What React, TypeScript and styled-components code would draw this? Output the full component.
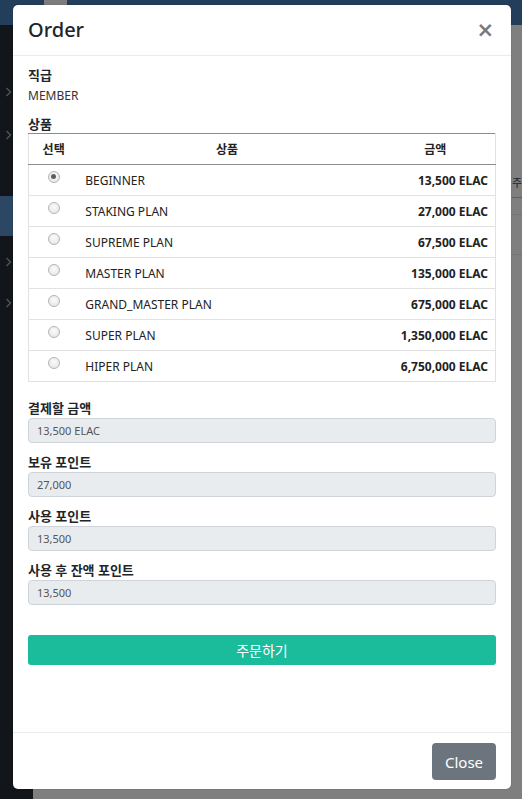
import React from "react";
import styled, { createGlobalStyle } from "styled-components";

const Global = createGlobalStyle`
  html, body { margin: 0; padding: 0; }
  body {
    width: 522px; height: 799px; overflow: hidden;
    font-family: "Noto Sans", "Noto Sans CJK KR", sans-serif;
    color: #212529;
  }
  * { box-sizing: border-box; }
`;

const Page = styled.div`
  position: relative;
  width: 522px;
  height: 799px;
  display: grid;
  grid-template-rows: 25px 1fr;
  grid-template-columns: 33px 1fr;
  background: #7f7f7f;
  overflow: hidden;
`;

const TopBar = styled.div`
  grid-column: 1 / 3;
  background: #233e5a;
  display: flex;
  padding-left: 44px;
`;

const TopBlock = styled.div`
  width: 23px;
  height: 5px;
  background: #7d7d7d;
`;

const SideBar = styled.div`
  background: #121519;
  display: flex;
  flex-direction: column;
  padding-top: 58px;
`;

const SideItem = styled.div<{ $active?: boolean; $h: number }>`
  height: ${(p) => p.$h}px;
  display: flex;
  align-items: center;
  padding-left: 5px;
  color: #4a4f55;
  font-size: 13px;
  background: ${(p) => (p.$active ? "#2b4764" : "transparent")};
`;

const Main = styled.div`
  display: flex;
  flex-direction: column;
  padding: 141px 0 0 479px;
`;

const BgRow = styled.div<{ $h: number; $light?: boolean }>`
  height: ${(p) => p.$h}px;
  border-bottom: 1px solid ${(p) => (p.$light ? "#767676" : "#5f5f5f")};
  display: flex;
  align-items: center;
  padding-left: 0;
  font-family: "Noto Sans CJK KR", sans-serif;
  font-size: 11px;
  color: #222;
  white-space: nowrap;
  overflow: hidden;
`;

const Modal = styled.div`
  position: absolute;
  top: 5px;
  left: 13px;
  width: 498px;
  height: 784px;
  background: #fff;
  border-radius: 5px;
  display: flex;
  flex-direction: column;
  box-shadow: 0 0 2px rgba(0, 0, 0, 0.2);
`;

const Header = styled.div`
  height: 51px;
  flex: none;
  display: flex;
  align-items: center;
  justify-content: space-between;
  padding: 0 15px;
  border-bottom: 1px solid #e9ecef;
`;

const Title = styled.h5`
  margin: 0;
  font-size: 20px;
  font-weight: 500;
  color: #212529;
  line-height: 24px;
`;

const CloseX = styled.button`
  border: 0;
  background: none;
  padding: 0;
  margin-right: 2px;
  font-family: "DejaVu Sans", sans-serif;
  font-size: 21px;
  font-weight: 700;
  line-height: 1;
  color: #7a7a7a;
  cursor: pointer;
`;

const Body = styled.div`
  flex: 1;
  padding: 10px 15px 0;
  display: flex;
  flex-direction: column;
`;

const Label = styled.div<{ $mt?: number }>`
  font-size: 13px;
  font-weight: 700;
  line-height: 18px;
  margin-top: ${(p) => p.$mt ?? 0}px;
  color: #212529;
`;

const Value = styled.div`
  font-size: 12px;
  line-height: 18px;
  margin-top: 3px;
  color: #333;
`;

const Table = styled.table`
  margin-top: 0;
  width: 100%;
  border-collapse: collapse;
  font-size: 12px;
  color: #222;
  border: 1px solid #e2e2e2;
  border-top: 1px solid #8c8c8c;
`;

const Th = styled.th<{ $align?: string }>`
  height: 31px;
  font-weight: 700;
  text-align: ${(p) => p.$align ?? "center"};
  border-bottom: 1px solid #8c8c8c;
  padding: 0;
  font-size: 12px;
`;

const Tr = styled.tr`
  height: 31px;
  & + & td { border-top: 1px solid #e2e2e2; }
`;

const Td = styled.td<{ $align?: string; $bold?: boolean }>`
  padding: 0 7px;
  text-align: ${(p) => p.$align ?? "left"};
  font-weight: ${(p) => (p.$bold ? 700 : 400)};
  white-space: nowrap;
`;

const RadioCell = styled.td`
  text-align: center;
  padding: 0;
  vertical-align: middle;
`;

const Radio = styled.span<{ $checked?: boolean }>`
  display: inline-block;
  width: 12px;
  height: 12px;
  border-radius: 50%;
  border: 1px solid #b5b5b5;
  background: radial-gradient(circle at 50% 40%, #fbfbfb 0%, #e2e2e2 100%);
  position: relative;
  top: -2px;
  &::after {
    content: "";
    display: ${(p) => (p.$checked ? "block" : "none")};
    position: absolute;
    left: 2.5px;
    top: 2.5px;
    width: 5px;
    height: 5px;
    border-radius: 50%;
    background: #5e5e5e;
  }
`;

const Field = styled.div`
  margin-top: 1px;
  height: 25px;
  background: #e9ecef;
  border: 1px solid #ced4da;
  border-radius: 4px;
  display: flex;
  align-items: center;
  padding: 0 8px;
  font-size: 11px;
  color: #555;
`;

const OrderButton = styled.button`
  margin-top: 30px;
  height: 30px;
  width: 100%;
  border: 0;
  border-radius: 3px;
  background: #1abc9c;
  color: #fff;
  font-family: "Noto Sans CJK KR", sans-serif;
  font-size: 14px;
  cursor: pointer;
`;

const Footer = styled.div`
  flex: none;
  height: 57px;
  border-top: 1px solid #e9ecef;
  display: flex;
  justify-content: flex-end;
  align-items: flex-start;
  padding: 10px 15px 0;
`;

const CloseButton = styled.button`
  height: 37px;
  width: 64px;
  border: 0;
  border-radius: 4px;
  background: #6c757d;
  color: #fff;
  font-family: "Noto Sans", sans-serif;
  font-size: 15px;
  cursor: pointer;
`;

const Chevron = () => (
  <svg width="7" height="10" viewBox="0 0 7 10">
    <path d="M1.5 1 L5.5 5 L1.5 9" stroke="#4f545a" strokeWidth="1.4" fill="none" />
  </svg>
);

const plans = [
  ["BEGINNER", "13,500 ELAC"],
  ["STAKING PLAN", "27,000 ELAC"],
  ["SUPREME PLAN", "67,500 ELAC"],
  ["MASTER PLAN", "135,000 ELAC"],
  ["GRAND_MASTER PLAN", "675,000 ELAC"],
  ["SUPER PLAN", "1,350,000 ELAC"],
  ["HIPER PLAN", "6,750,000 ELAC"],
];

const fields = [
  ["결제할 금액", "13,500 ELAC"],
  ["보유 포인트", "27,000"],
  ["사용 포인트", "13,500"],
  ["사용 후 잔액 포인트", "13,500"],
];

export default function App() {
  return (
    <>
      <Global />
      <Page>
        <TopBar>
          <TopBlock />
        </TopBar>
        <SideBar>
          <SideItem $h={18}><Chevron /></SideItem>
          <SideItem $h={25} />
          <SideItem $h={18}><Chevron /></SideItem>
          <SideItem $h={52} />
          <SideItem $h={40} $active />
          <SideItem $h={17} />
          <SideItem $h={18}><Chevron /></SideItem>
          <SideItem $h={23} />
          <SideItem $h={18}><Chevron /></SideItem>
        </SideBar>
        <Main>
          <BgRow $h={32}>주</BgRow>
          <BgRow $h={17} $light />
          <BgRow $h={40} $light />
        </Main>
        <Modal>
          <Header>
            <Title>Order</Title>
            <CloseX aria-label="Close">×</CloseX>
          </Header>
          <Body>
            <Label>직급</Label>
            <Value>MEMBER</Value>
            <Label $mt={10}>상품</Label>
            <Table>
              <colgroup>
                <col style={{ width: 50 }} />
                <col style={{ width: 298 }} />
                <col style={{ width: 120 }} />
              </colgroup>
              <thead>
                <tr>
                  <Th>선택</Th>
                  <Th>상품</Th>
                  <Th>금액</Th>
                </tr>
              </thead>
              <tbody>
                {plans.map(([name, price], i) => (
                  <Tr key={name}>
                    <RadioCell>
                      <Radio $checked={i === 0} />
                    </RadioCell>
                    <Td>{name}</Td>
                    <Td $align="right" $bold>
                      {price}
                    </Td>
                  </Tr>
                ))}
              </tbody>
            </Table>
            {fields.map(([label, value], i) => (
              <React.Fragment key={label}>
                <Label $mt={i === 0 ? 17 : 10}>{label}</Label>
                <Field>{value}</Field>
              </React.Fragment>
            ))}
            <OrderButton>주문하기</OrderButton>
          </Body>
          <Footer>
            <CloseButton>Close</CloseButton>
          </Footer>
        </Modal>
      </Page>
    </>
  );
}
